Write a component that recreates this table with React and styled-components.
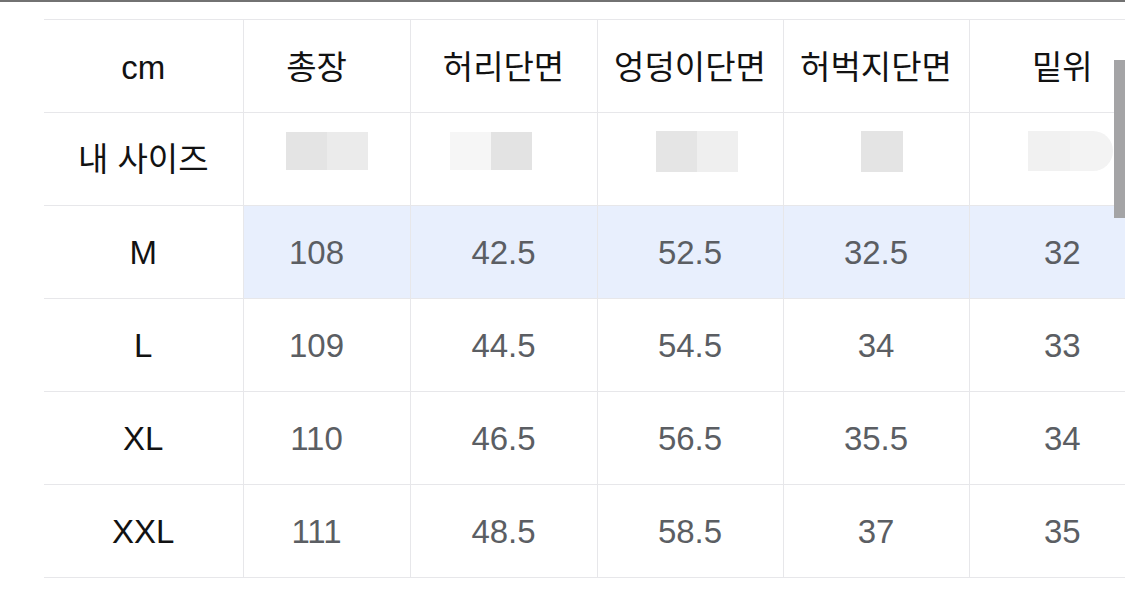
import React from "react";
import styled, { createGlobalStyle } from "styled-components";

const Global = createGlobalStyle`
  html, body { margin: 0; padding: 0; background: #fff; overflow: hidden; }
  body { font-family: "Liberation Sans", "Noto Sans CJK KR", sans-serif; }
`;

const Page = styled.div`
  position: relative;
  width: 1125px;
  height: 598px;
  overflow: hidden;
  background: #fff;
`;

const TopRule = styled.div`
  height: 2px;
  background: #727272;
`;

const Scroller = styled.div`
  padding: 17px 0 0 44px;
`;

const Table = styled.table`
  border-collapse: collapse;
  table-layout: fixed;
  width: 1111px;
  font-size: 33px;
`;

const Row = styled.tr`
  height: 93px;
  border-top: 1px solid #e7e7ea;
  border-bottom: 1px solid #e7e7ea;
`;

const Cell = styled.td`
  padding: 0;
  padding-right: ${(p) => (p.$shift ? "20px" : "0")};
  padding-top: ${(p) => (p.$top ? "2px" : "0")};
  text-align: center;
  vertical-align: middle;
  border-left: ${(p) => (p.$first ? "none" : "1px solid #e7e7ea")};
  background: ${(p) => (p.$hl ? "#e8effd" : "transparent")};
  color: ${(p) => (p.$head ? "#121212" : "#5b5e63")};
  font-family: "Liberation Sans", "Noto Sans CJK KR", sans-serif;
  font-weight: 400;
  line-height: 1;
`;

const Mask = styled.div`
  display: inline-flex;
  width: ${(p) => p.$w}px;
  height: ${(p) => p.$h}px;
  margin-left: ${(p) => p.$dx || 0}px;
  margin-bottom: 16px;
  vertical-align: middle;
  border-radius: ${(p) => (p.$round ? "0 20px 20px 0" : "0")};
  overflow: hidden;
`;

const MaskHalf = styled.span`
  flex: 1;
  background: ${(p) => p.$c};
`;

const cols = ["cm", "총장", "허리단면", "엉덩이단면", "허벅지단면", "밑위"];
const rows = [
  { size: "M", v: ["108", "42.5", "52.5", "32.5", "32"], hl: true },
  { size: "L", v: ["109", "44.5", "54.5", "34", "33"] },
  { size: "XL", v: ["110", "46.5", "56.5", "35.5", "34"] },
  { size: "XXL", v: ["111", "48.5", "58.5", "37", "35"] },
];

const masks = [
  { w: 82, h: 38, a: "#e4e4e4", b: "#ebebeb", dx: 0 },
  { w: 82, h: 38, a: "#f6f6f6", b: "#e3e3e3", dx: -26 },
  { w: 82, h: 41, a: "#e5e5e5", b: "#efefef", dx: 14 },
  { w: 42, h: 41, a: "#e4e4e4", b: "#e4e4e4", dx: 12 },
  { w: 85, h: 40, a: "#f1f1f1", b: "#f3f3f3", dx: 16, round: true },
];

const Thumb = styled.div`
  position: absolute;
  left: 1114px;
  top: 60px;
  width: 11px;
  height: 158px;
  background: #a4a4a6;
`;

export default function App() {
  return (
    <Page>
      <Global />
      <TopRule />
      <Scroller>
        <Table>
          <colgroup>
            <col style={{ width: 199 }} />
            <col style={{ width: 167 }} />
            <col style={{ width: 187 }} />
            <col style={{ width: 186 }} />
            <col style={{ width: 186 }} />
            <col style={{ width: 186 }} />
          </colgroup>
          <tbody>
            <Row>
              {cols.map((c, i) => (
                <Cell key={c} $head $first={i === 0} $shift={i === 1} $top>
                  {c}
                </Cell>
              ))}
            </Row>
            <Row>
              <Cell $head $first>
                내 사이즈
              </Cell>
              {masks.map((m, i) => (
                <Cell key={i}>
                  <Mask $w={m.w} $h={m.h} $dx={m.dx} $round={m.round}>
                    <MaskHalf $c={m.a} />
                    <MaskHalf $c={m.b} />
                  </Mask>
                </Cell>
              ))}
            </Row>
            {rows.map((r) => (
              <Row key={r.size}>
                <Cell $head $first>
                  {r.size}
                </Cell>
                {r.v.map((v, i) => (
                  <Cell key={i} $hl={r.hl} $shift={i === 0}>
                    {v}
                  </Cell>
                ))}
              </Row>
            ))}
          </tbody>
        </Table>
      </Scroller>
      <Thumb />
    </Page>
  );
}
